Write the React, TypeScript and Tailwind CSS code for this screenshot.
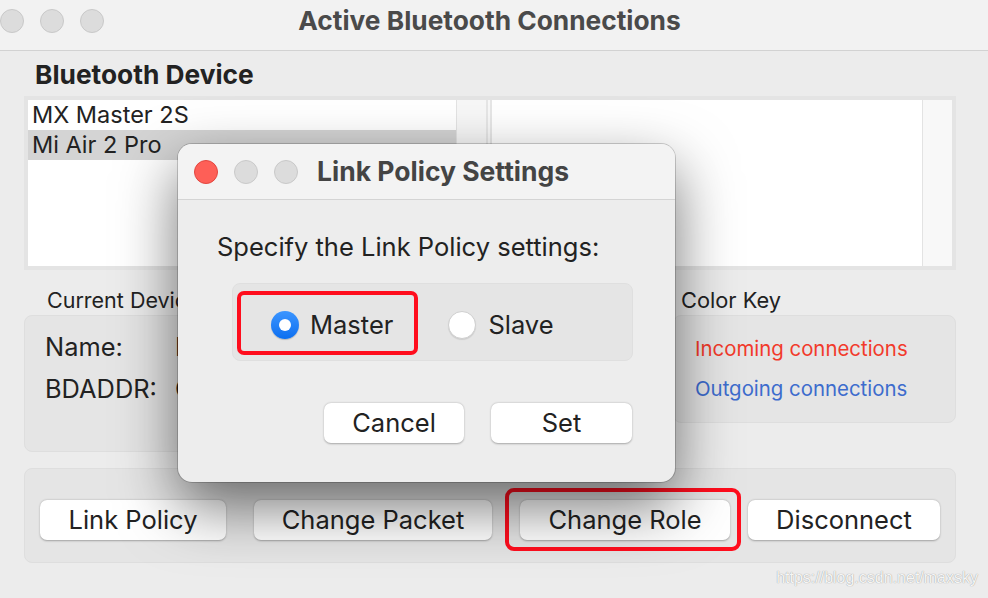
import React from "react";

const font = { fontFamily: 'Inter, "Noto Sans", "Liberation Sans", sans-serif' };

function Lights({ red }: { red?: boolean }) {
  return (
    <div className="flex items-center gap-[16px]">
      <span
        className={
          red
            ? "h-[24px] w-[24px] rounded-full bg-[#fe5f57] border border-[#e2463f]"
            : "h-[24px] w-[24px] rounded-full bg-[#dcdcdc] border border-[#c9c9c9]"
        }
      />
      <span className="h-[24px] w-[24px] rounded-full bg-[#dcdcdc] border border-[#c9c9c9]" />
      <span className="h-[24px] w-[24px] rounded-full bg-[#dcdcdc] border border-[#c9c9c9]" />
    </div>
  );
}

function MacButton({ label, width }: { label: string; width: string }) {
  return (
    <button
      type="button"
      className={`${width} h-[40px] shrink-0 rounded-[7px] bg-white text-[25.5px] leading-[30px] text-[#222] shadow-[0_0.5px_2px_rgba(0,0,0,0.3)]`}
    >
      {label}
    </button>
  );
}

function LinkPolicyDialog() {
  return (
    <div className="absolute left-[178px] top-[144px] flex h-[338px] w-[497px] flex-col overflow-hidden rounded-[14px] bg-[#ededed] shadow-[0_24px_60px_rgba(0,0,0,0.55),0_0_0_1px_rgba(0,0,0,0.18)]">
      <div className="flex h-[56px] shrink-0 items-center border-b border-[#d4d4d4] bg-[#f3f3f3] pl-[16px]">
        <Lights red />
        <span className="ml-[19px] text-[26.5px] font-bold text-[#444]">Link Policy Settings</span>
      </div>
      <div className="flex flex-col pl-[39px]">
        <p className="mt-[31px] text-[25.5px] leading-[32px] text-[#222]">Specify the Link Policy settings:</p>
        <div className="relative ml-[15px] mt-[20px] flex h-[78px] w-[401px] items-center rounded-[8px] border border-[#dfdfdf] bg-[#e5e5e5] pt-[6px]">
          <span className="ml-[38px] flex h-[28px] w-[28px] items-center justify-center rounded-full bg-gradient-to-b from-[#3a95ff] to-[#0a6ff0] shadow-[0_1px_1px_rgba(0,0,0,0.2)]">
            <span className="h-[12px] w-[12px] rounded-full bg-white" />
          </span>
          <span className="ml-[11px] text-[25.5px] text-[#222]">Master</span>
          <span className="ml-[55px] h-[28px] w-[28px] rounded-full border border-[#cfcfcf] bg-white shadow-[0_1px_1px_rgba(0,0,0,0.1)]" />
          <span className="ml-[12px] text-[25.5px] text-[#222]">Slave</span>
          <div className="pointer-events-none absolute left-[4px] top-[7px] h-[64px] w-[181px] rounded-[7px] border-[4px] border-[#ff0d1d]" />
        </div>
        <div className="ml-[107px] mt-[42px] flex gap-[27px]">
          <MacButton label="Cancel" width="w-[140px]" />
          <MacButton label="Set" width="w-[141px]" />
        </div>
      </div>
    </div>
  );
}

export default function App() {
  return (
    <div className="relative h-[598px] w-[988px] overflow-hidden bg-[#ececec]" style={font}>
      {/* title bar */}
      <div className="grid h-[51px] grid-cols-[1fr_auto_1fr] items-start border-b border-[#d2d2d2] bg-[#f2f2f2]">
        <div className="mt-[9px]">
          <Lights />
        </div>
        <h1 className="mr-[9px] mt-[5px] text-[26.3px] font-bold leading-[32px] text-[#4a4a4a]">
          Active Bluetooth Connections
        </h1>
        <div />
      </div>

      <div className="flex flex-col pl-[24px] pr-[32px]">
        <h2 className="ml-[11px] mt-[8px] text-[26.3px] font-bold leading-[32px] text-[#222]">Bluetooth Device</h2>

        {/* device lists */}
        <div className="mt-[5px] flex h-[174px] border-[4px] border-[#e4e4e4] bg-[#e4e4e4]">
          <div className="flex w-[428px] flex-col bg-white text-[23.5px] text-[#222]">
            <div className="flex h-[30px] items-center pl-[4px]">MX Master 2S</div>
            <div className="flex h-[30px] items-center bg-[#d4d4d4] pl-[4px]">Mi Air 2 Pro</div>
          </div>
          <div className="w-[30px] border-l border-[#e3e3e3] bg-[#f7f7f7]" />
          <div className="w-[6px] bg-[#e6e6e6]">
            <div className="mx-auto h-full w-[2px] bg-[#f8f8f8]" />
          </div>
          <div className="w-[430px] bg-white" />
          <div className="w-[30px] border-l border-[#e3e3e3] bg-[#f8f8f8]" />
        </div>

        {/* device info + color key */}
        <div className="mt-[17px] flex gap-[17px]">
          <div className="flex w-[632px] flex-col">
            <span className="ml-[23px] text-[21.5px] leading-[26px] text-[#222]">Current Device</span>
            <div className="mt-[2px] flex h-[137px] flex-col gap-[12px] rounded-[8px] border border-[#dedede] bg-[#e5e5e5] pl-[20px] pt-[16px] text-[25.4px] leading-[30px] text-[#222]">
              <div className="flex">
                <span className="w-[130px]">Name:</span>
                <span>Mi Air 2 Pro</span>
              </div>
              <div className="flex">
                <span className="w-[130px]">BDADDR:</span>
                <span>C4:1C:AE:52:10:7B</span>
              </div>
            </div>
          </div>
          <div className="flex flex-1 flex-col">
            <span className="ml-[8px] text-[21.8px] leading-[26px] text-[#222]">Color Key</span>
            <div className="mt-[2px] flex h-[108px] flex-col gap-[16px] rounded-[8px] border border-[#dedede] bg-[#e5e5e5] pl-[21px] pt-[21px] text-[20.4px] leading-[24px]">
              <span className="text-[#f23a2b]">Incoming connections</span>
              <span className="text-[#3d6ccd]">Outgoing connections</span>
            </div>
          </div>
        </div>

        {/* actions */}
        <div className="mt-[16px] flex h-[95px] items-start rounded-[8px] border border-[#dedede] bg-[#e5e5e5] pl-[15px] pt-[31px]">
          <MacButton label="Link Policy" width="w-[186px]" />
          <div className="ml-[28px]">
            <MacButton label="Change Packet" width="w-[238px]" />
          </div>
          <div className="relative ml-[28px]">
            <MacButton label="Change Role" width="w-[210px]" />
            <div className="pointer-events-none absolute left-[-15px] top-[-12px] h-[63px] w-[236px] rounded-[9px] border-[4px] border-[#ff0d1d]" />
          </div>
          <div className="ml-[18px]">
            <MacButton label="Disconnect" width="w-[192px]" />
          </div>
        </div>
      </div>

      <LinkPolicyDialog />

      <span
        className="absolute bottom-[8px] right-[10px] text-[16px] text-[#f6f6f6] [text-shadow:0_0_1px_rgba(0,0,0,0.45)]"
        style={{ fontFamily: '"Liberation Sans", Arial, sans-serif' }}
      >
        https://blog.csdn.net/maxsky
      </span>
    </div>
  );
}
